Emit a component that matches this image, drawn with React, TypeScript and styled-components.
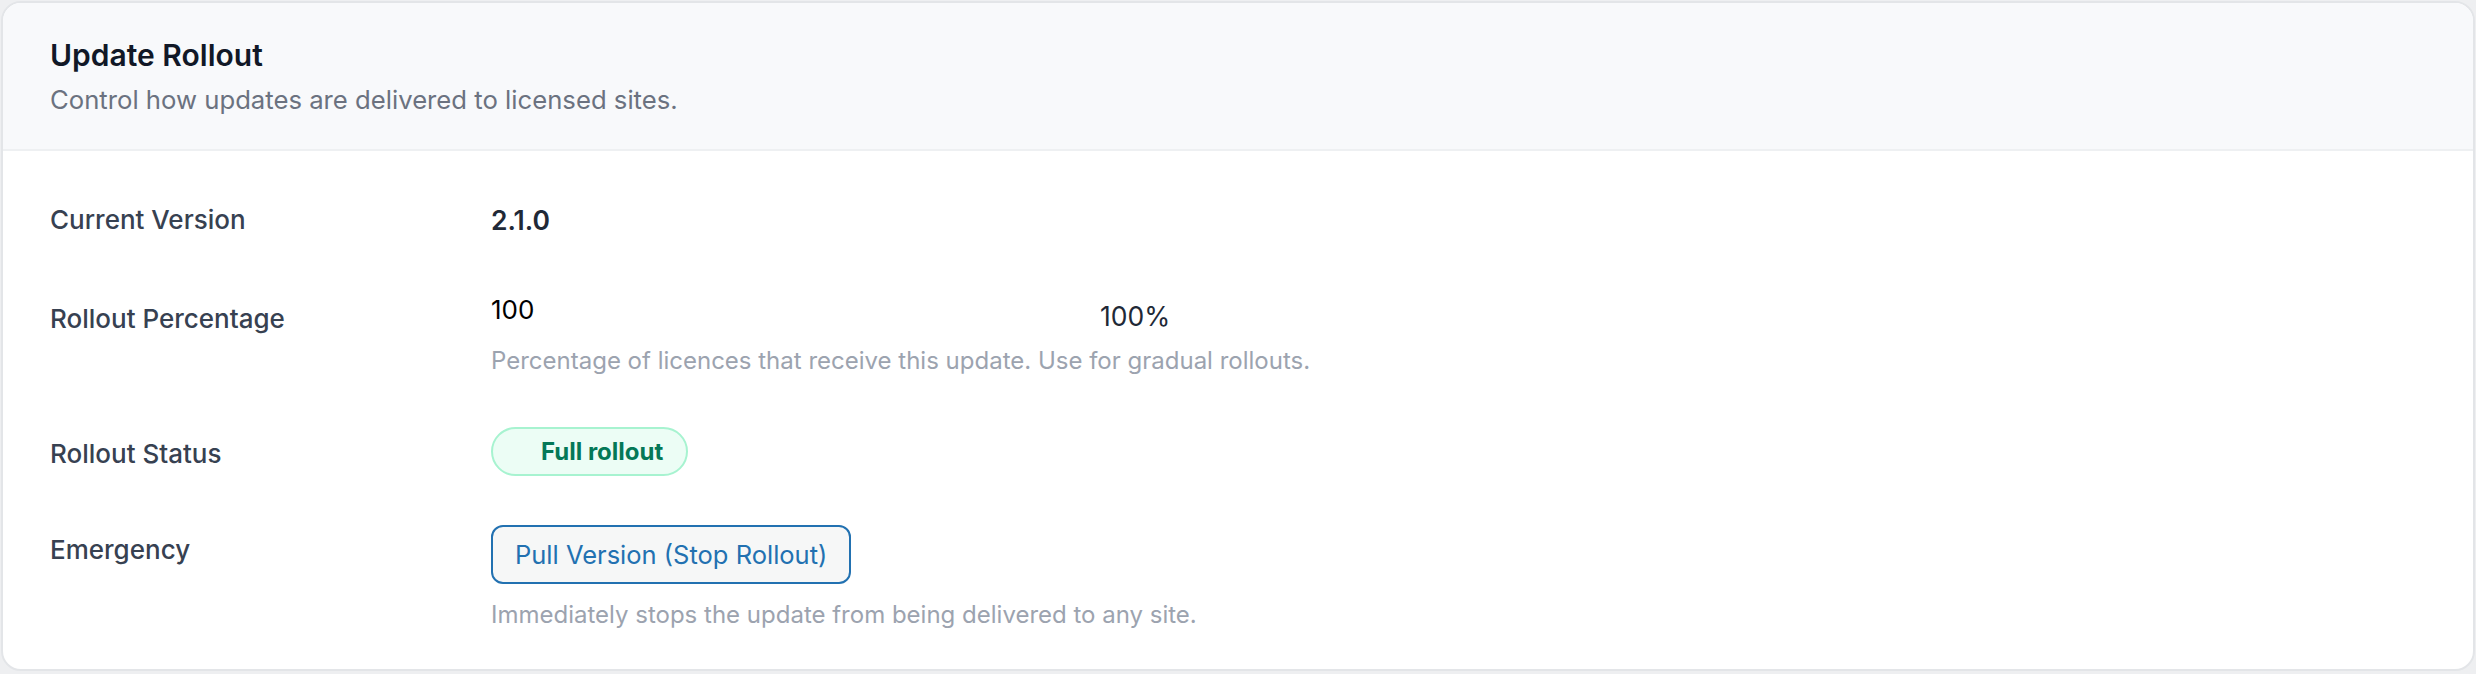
import styled, { createGlobalStyle } from 'styled-components';

const GlobalStyle = createGlobalStyle`
  html, body {
    margin: 0;
    padding: 0;
    background: #eeeff1;
  }
  body {
    padding: 1px;
    font-family: Inter, "Noto Sans", "Liberation Sans", sans-serif;
    -webkit-font-smoothing: antialiased;
  }
`;

const Card = styled.section`
  background: #ffffff;
  border: 2px solid #e3e5e8;
  border-radius: 20px;
  overflow: hidden;
`;

const CardHeader = styled.header`
  background: #f8f9fb;
  border-bottom: 2px solid #eef0f2;
  padding: 32px 47px 32px;
`;

const Title = styled.h2`
  margin: 0;
  font-size: 30px;
  line-height: 40px;
  font-weight: 600;
  color: #111827;
`;

const Subtitle = styled.p`
  margin: 8px 0 0;
  font-size: 25.7px;
  line-height: 34px;
  color: #6b7280;
`;

const Body = styled.div`
  padding: 32px 47px 18px;
`;

const Row = styled.div`
  display: grid;
  grid-template-columns: 441px 1fr;
  align-items: start;
  padding: 19px 0;
`;

const Label = styled.div<{ $offset?: number }>`
  margin-top: ${(p) => p.$offset ?? 0}px;
  font-size: 26px;
  line-height: 36px;
  font-weight: 500;
  color: #374151;
`;

const Value = styled.div`
  display: flex;
  flex-direction: column;
  align-items: flex-start;
`;

const Version = styled.strong`
  font-size: 26.5px;
  line-height: 36px;
  font-weight: 600;
  color: #1f2937;
`;

const SliderRow = styled.div`
  display: flex;
  align-items: flex-start;
  gap: 20px;
`;

const NumberInput = styled.input`
  box-sizing: border-box;
  width: 190px;
  height: 60px;
  padding: 6px 0 0;
  border: none;
  background: transparent;
  font-family: inherit;
  font-size: 26px;
  color: #000000;
  outline: none;
  -moz-appearance: textfield;
  &::-webkit-inner-spin-button,
  &::-webkit-outer-spin-button {
    -webkit-appearance: none;
    margin: 0;
  }
`;

const Range = styled.input`
  -webkit-appearance: none;
  appearance: none;
  width: 379px;
  height: 60px;
  margin: 0;
  background: transparent;
  &::-webkit-slider-thumb {
    -webkit-appearance: none;
    width: 0;
    height: 0;
  }
`;

const Percent = styled.span`
  margin-top: 22px;
  font-size: 26.5px;
  line-height: 36px;
  color: #1f2937;
`;

const Help = styled.p<{ $gap?: number }>`
  margin: ${(p) => p.$gap ?? 8}px 0 0;
  font-size: 24px;
  line-height: 34px;
  color: #9ca3af;
`;

const Pill = styled.span`
  display: inline-flex;
  align-items: center;
  margin: 11px 0;
  height: 49px;
  box-sizing: border-box;
  padding: 0 23px 0 48px;
  border: 2px solid #a7f3d0;
  border-radius: 999px;
  background: #ecfdf5;
  font-size: 24px;
  font-weight: 700;
  color: #047857;
`;

const PullButton = styled.button`
  height: 59px;
  padding: 0 22px;
  border: 2px solid #2271b1;
  border-radius: 12px;
  background: #f6f7f7;
  font-family: inherit;
  font-size: 25.5px;
  color: #2271b1;
  cursor: pointer;
`;

export default function App() {
  return (
    <>
      <GlobalStyle />
      <Card>
        <CardHeader>
          <Title>Update Rollout</Title>
          <Subtitle>Control how updates are delivered to licensed sites.</Subtitle>
        </CardHeader>
        <Body>
          <Row>
            <Label>Current Version</Label>
            <Value>
              <Version>2.1.0</Version>
            </Value>
          </Row>
          <Row>
            <Label $offset={25}>Rollout Percentage</Label>
            <Value>
              <SliderRow>
                <NumberInput type="number" defaultValue={100} min={0} max={100} />
                <Range type="range" defaultValue={100} min={0} max={100} />
                <Percent>100%</Percent>
              </SliderRow>
              <Help>Percentage of licences that receive this update. Use for gradual rollouts.</Help>
            </Value>
          </Row>
          <Row>
            <Label $offset={20}>Rollout Status</Label>
            <Value>
              <Pill>Full rollout</Pill>
            </Value>
          </Row>
          <Row>
            <Label $offset={7}>Emergency</Label>
            <Value>
              <PullButton type="button">Pull Version (Stop Rollout)</PullButton>
              <Help $gap={14}>Immediately stops the update from being delivered to any site.</Help>
            </Value>
          </Row>
        </Body>
      </Card>
    </>
  );
}
